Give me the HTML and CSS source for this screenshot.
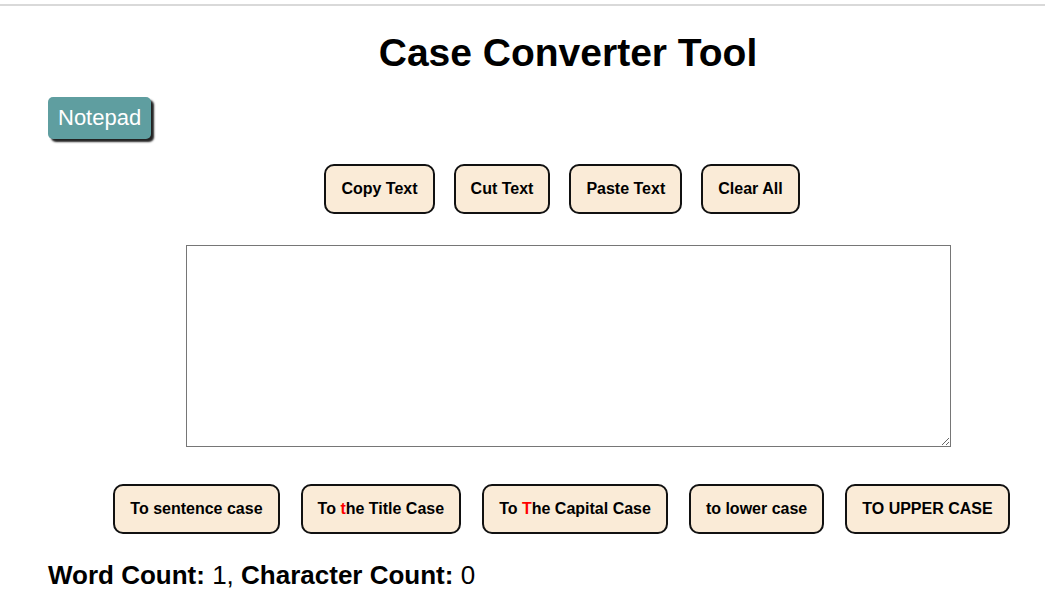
FILE: index.html
```html
<!DOCTYPE html>
<html lang="en">
<head>
<meta charset="utf-8">
<title>Case Converter Tool</title>
<link rel="stylesheet" href="styles.css">
</head>
<body>
<div class="topline"></div>
<div class="page">
  <h1 class="title">Case Converter Tool</h1>
  <button class="notepad">Notepad</button>
  <div class="row row-top">
    <button class="btn">Copy Text</button>
    <button class="btn">Cut Text</button>
    <button class="btn">Paste Text</button>
    <button class="btn">Clear All</button>
  </div>
  <div class="editor">
    <textarea class="area"></textarea>
  </div>
  <div class="row row-bottom">
    <button class="btn">To sentence case</button>
    <button class="btn">To <span class="red">t</span>he Title Case</button>
    <button class="btn">To <span class="red">T</span>he Capital Case</button>
    <button class="btn">to lower case</button>
    <button class="btn">TO UPPER CASE</button>
  </div>
  <p class="count"><b>Word Count:</b> 1, <b>Character Count:</b> 0</p>
</div>
</body>
</html>
```
FILE: styles.css
```css
html {
  overflow: hidden;
}
body {
  margin: 0;
  font-family: "Liberation Sans", Arial, sans-serif;
  color: #000;
  background: #fff;
}
.topline {
  height: 2px;
  margin-top: 4px;
  background: #d9d9d9;
}
.page {
  width: 1040px;
  margin-left: 48px;
}
.title {
  margin: 25px 0 0;
  font-size: 39px;
  line-height: 44px;
  font-weight: bold;
  text-align: center;
}
.notepad {
  display: block;
  margin-top: 22px;
  padding: 8px 10px 9px;
  font-family: "Liberation Sans", Arial, sans-serif;
  font-size: 22px;
  line-height: 25px;
  color: #fff;
  background: #5f9ea0;
  border: none;
  border-radius: 5px;
  box-shadow: 3px 3px 2px #222;
}
.row {
  display: flex;
  justify-content: center;
}
.row-top {
  margin-top: 25px;
  gap: 19px;
  padding-right: 12px;
}
.row-bottom {
  margin-top: 37px;
  gap: 21px;
  padding-right: 13px;
}
.btn {
  padding: 13px 15px;
  font-family: "Liberation Sans", Arial, sans-serif;
  font-size: 16px;
  line-height: 20px;
  font-weight: bold;
  color: #000;
  background: #faebd7;
  border: 2px solid #111;
  border-radius: 10px;
}
.red {
  color: #f00;
}
.editor {
  display: flex;
  justify-content: center;
  margin-top: 31px;
}
.area {
  box-sizing: border-box;
  width: 765px;
  height: 202px;
  margin: 0;
  border: 1px solid #767676;
  display: block;
}
.count {
  margin: 26px 0 0;
  font-size: 26px;
  line-height: 30px;
}
```
